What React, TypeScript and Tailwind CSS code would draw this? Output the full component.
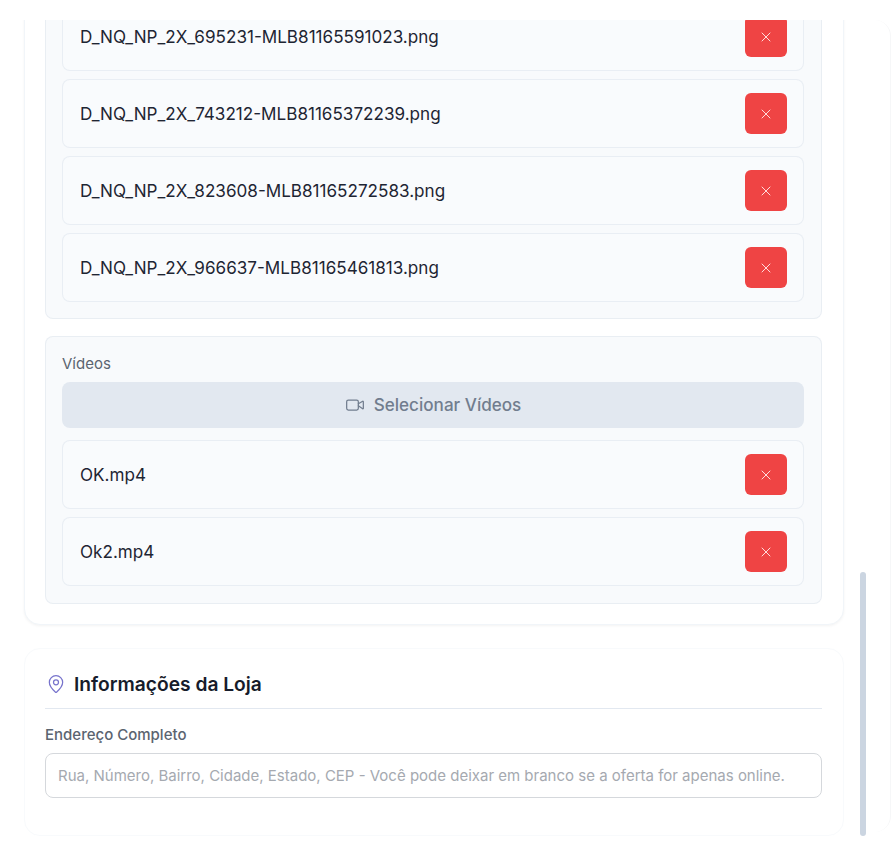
import { MapPin, Video, X } from "lucide-react";

const imageFiles = [
  "D_NQ_NP_2X_695231-MLB81165591023.png",
  "D_NQ_NP_2X_743212-MLB81165372239.png",
  "D_NQ_NP_2X_823608-MLB81165272583.png",
  "D_NQ_NP_2X_966637-MLB81165461813.png",
];
const videoFiles = ["OK.mp4", "Ok2.mp4"];

const FileRow = ({ name }: { name: string }) => (
  <div className="flex h-[69px] items-center justify-between rounded-lg border border-slate-200/70 bg-[#f9fbfd] pl-[17px] pr-4">
    <span className="text-[17.1px] text-[#1e2533]">{name}</span>
    <button className="flex h-[41px] w-[42px] items-center justify-center rounded-md bg-[#ef4444] text-[#fdd]">
      <X size={16} strokeWidth={1.5} />
    </button>
  </div>
);

const App = () => {
  return (
    <div className="relative h-[846px] w-[894px] overflow-hidden bg-white font-['Inter',sans-serif]">
      <div className="absolute left-0 top-5 h-[812px] w-[891px] rounded-2xl border-r border-[#f6f7f8]" />
      <div className="relative mt-5 h-[816px] overflow-hidden">
        <div className="-mt-[56px] ml-6 mr-[50px] flex flex-col gap-[23px]">
          <section className="rounded-2xl border border-slate-100 bg-white pb-5 pl-5 pr-[21px] pt-[36px] shadow-[0_1px_3px_rgba(0,0,0,0.05)]">
            <div className="flex flex-col gap-2 rounded-lg border border-slate-200/70 bg-[#f8fafc] pb-4 pl-4 pr-[17px]">
              {imageFiles.map((f) => (
                <FileRow key={f} name={f} />
              ))}
            </div>
            <div className="mt-[17px] rounded-lg border border-slate-200/70 bg-[#f8fafc] pb-[17px] pl-4 pr-[17px] pt-[17px]">
              <div className="mb-2 h-5 text-[15px] leading-5 text-[#5b6470]">Vídeos</div>
              <button className="flex h-[46px] w-full items-center justify-center gap-[9px] rounded-lg bg-[#e2e8f0] font-medium text-[#717d8e]">
                <Video size={20} strokeWidth={1.5} />
                <span className="text-[17.1px]">Selecionar Vídeos</span>
              </button>
              <div className="mt-3 flex flex-col gap-2">
                {videoFiles.map((f) => (
                  <FileRow key={f} name={f} />
                ))}
              </div>
            </div>
          </section>
          <section className="h-[188px] rounded-2xl border border-slate-50 bg-white pl-5 pr-[21px] pt-[23px]">
            <div className="flex h-[37px] items-center gap-2 border-b border-slate-200 pb-3 pl-px">
              <MapPin size={20} strokeWidth={1.5} className="text-[#7773cc]" />
              <h2 className="text-[19.2px] font-semibold text-[#171c2b]">Informações da Loja</h2>
            </div>
            <label className="mt-4 block text-[15px] font-medium leading-5 text-[#5b6470]">Endereço Completo</label>
            <input
              readOnly
              placeholder="Rua, Número, Bairro, Cidade, Estado, CEP - Você pode deixar em branco se a oferta for apenas online."
              className="mt-2 h-[45px] w-full rounded-lg border border-[#d5d8dc] bg-white px-3 text-[15px] placeholder:text-[#a5a9b0]"
            />
          </section>
        </div>
      </div>
      <div className="absolute left-[860px] top-[572px] h-[264px] w-[6px] rounded-full bg-[#cbd5e1]" />
    </div>
  );
};

export default App;
